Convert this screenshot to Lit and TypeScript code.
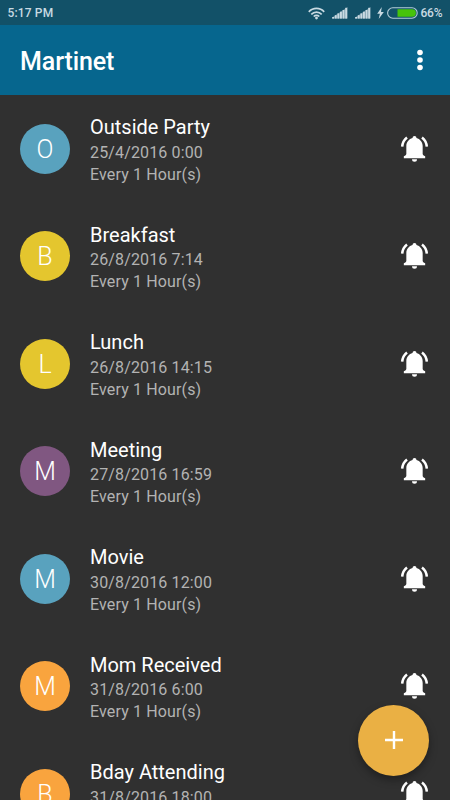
import { LitElement, html, css, svg } from "lit";
import { customElement } from "lit/decorators.js";
import { styleMap } from "lit/directives/style-map.js";

interface Reminder {
  title: string;
  date: string;
  color: string;
}

const REMINDERS: Reminder[] = [
  { title: "Outside Party", date: "25/4/2016 0:00", color: "#59a2be" },
  { title: "Breakfast", date: "26/8/2016 7:14", color: "#e4c62e" },
  { title: "Lunch", date: "26/8/2016 14:15", color: "#e4c62e" },
  { title: "Meeting", date: "27/8/2016 16:59", color: "#805781" },
  { title: "Movie", date: "30/8/2016 12:00", color: "#59a2be" },
  { title: "Mom Received", date: "31/8/2016 6:00", color: "#f9a43e" },
  { title: "Bday Attending", date: "31/8/2016 18:00", color: "#f9a43e" },
];

@customElement("status-bar")
export class StatusBar extends LitElement {
  static styles = css`
    :host {
      display: flex;
      align-items: center;
      height: 25px;
      box-sizing: border-box;
      padding: 1px 7.5px 0 7.5px;
      background: #125168;
      color: #c9dae2;
      font: 500 12px/24px Roboto, sans-serif;
    }
    .time { flex: 1; letter-spacing: 0.15px; }
    svg { display: block; flex: none; }
    .wifi { margin-right: 7px; }
    .signal { margin-right: 7px; }
    .bolt { margin-left: -1px; margin-right: 3px; }
    .battery { margin-right: 3px; }
    .percent { width: 22px; letter-spacing: -0.2px; }
  `;

  private signal() {
    return html`<svg class="signal" width="16" height="12" viewBox="0 0 16 12">
      <path d="M0 11.600V10.400L15.600 0V11.600z" fill="#c9dae2" opacity=".45" />
      ${[1.6, 3.4, 5.2, 6.9, 8.6, 10.8].map(
        (h, i) => svg`<rect x=${0.2 + i * 2.6} y=${11.6 - h} width="1.9" height=${h}
          fill="#c9dae2"></rect>`
      )}
    </svg>`;
  }

  render() {
    return html`
      <span class="time">5:17 PM</span>
      <svg class="wifi" width="17" height="13" viewBox="0 0 17 13">
        <g fill="none" stroke="#c9dae2" stroke-width="1.7">
          <path d="M.8 4.800C5 .3 12 .3 16.200 4.800" />
          <path d="M3.300 7.300c2.900-3 7.500-3 10.400 0" />
          <path d="M5.700 9.500c1.600-1.600 4-1.600 5.600 0" />
        </g>
        <circle cx="8.500" cy="11.100" r="1.400" fill="#c9dae2" />
      </svg>
      ${this.signal()} ${this.signal()}
      <svg class="bolt" width="7" height="12" viewBox="0 0 7 12">
        <path d="M4.800 0L.2 6.800h2.700L1.700 12 6.800 4.900H4z" fill="#c9dae2" />
      </svg>
      <svg class="battery" width="31" height="12" viewBox="0 0 31 12">
        <rect x=".6" y=".8" width="29.600" height="10.400" rx="5.200" fill="none"
          stroke="#b5cdd8" stroke-width="1.100" />
        <path d="M10.500 2.300h14.700a3.700 3.700 0 0 1 0 7.400H10.500z" fill="#46c30b" />
      </svg>
      <span class="percent">66%</span>
    `;
  }
}

@customElement("app-toolbar")
export class AppToolbar extends LitElement {
  static styles = css`
    :host {
      display: flex;
      align-items: center;
      justify-content: space-between;
      height: 70px;
      box-sizing: border-box;
      padding: 0 27px 0 20px;
      background: #06668e;
      color: #fff;
      font: 500 25px/30px Roboto, sans-serif;
    }
    .title { padding-top: 3px; letter-spacing: -0.1px; }
    svg { display: block; }
  `;

  render() {
    return html`
      <span class="title">Martinet</span>
      <svg width="6" height="22" viewBox="0 0 6 22" fill="#fff">
        <circle cx="3" cy="3.500" r="2.800" />
        <circle cx="3" cy="11" r="2.800" />
        <circle cx="3" cy="18.500" r="2.800" />
      </svg>
    `;
  }
}

@customElement("reminder-row")
export class ReminderRow extends LitElement {
  static properties = { item: { attribute: false } };
  declare item: Reminder;

  static styles = css`
    :host {
      display: flex;
      align-items: center;
      height: 107.5px;
      box-sizing: border-box;
      padding: 0 20px;
      font-family: Roboto, sans-serif;
    }
    .avatar {
      display: flex;
      align-items: center;
      justify-content: center;
      flex: none;
      width: 50px;
      height: 50px;
      border-radius: 50%;
      color: #fff;
      font-size: 25px;
      font-weight: 300;
      line-height: 50px;
    }
    .avatar span { padding-top: 1.500px; }
    .text { flex: 1; margin-left: 20px; padding-top: 3.900px; }
    .title { color: #fff; font-size: 20px; line-height: 25.600px; }
    .detail { color: #b3b3b3; font-size: 16px; line-height: 22px; letter-spacing: 0.14px; }
    .title + .detail { margin-top: 0.9px; }
    svg { display: block; flex: none; }
  `;

  render() {
    const { title, date, color } = this.item;
    return html`
      <div class="avatar" style=${styleMap({ background: color })}><span>${title[0]}</span></div>
      <div class="text">
        <div class="title">${title}</div>
        <div class="detail">${date}</div>
        <div class="detail">Every 1 Hour(s)</div>
      </div>
      <svg width="30" height="28" viewBox="0 0 90 84" fill="#fff">
        <path
          d="M43.500 3a6 6 0 0 1 6 6C60 12 68 21 68 33v23c0 3.500 3 5 7.500 8v6h-64v-6c4.500-3 7.500-4.500 7.500-8V33C19 21 27 12 37.500 9a6 6 0 0 1 6-6z"
        />
        <path d="M36 73h15a7.500 7.500 0 0 1-15 0z" />
        <path
          d="M6.500 35C7.500 24 12.500 14 21 7.500M80.500 35C79.500 24 74.500 14 66 7.500"
          fill="none" stroke="#fff" stroke-width="7.500"
        />
      </svg>
    `;
  }
}

@customElement("app-root")
export class AppRoot extends LitElement {
  static styles = css`
    :host {
      display: flex;
      flex-direction: column;
      position: relative;
      width: 450px;
      height: 800px;
      overflow: hidden;
      background: #303030;
    }
    status-bar, app-toolbar { flex: none; }
    .list { flex: 1; min-height: 0; overflow: hidden; }
    .fab {
      position: absolute;
      right: 21px;
      bottom: 24.5px;
      display: flex;
      align-items: center;
      justify-content: center;
      width: 71px;
      height: 71px;
      padding: 0;
      border: 0;
      border-radius: 50%;
      background: #eab044;
      box-shadow: 0 4px 8px rgba(0, 0, 0, 0.35);
    }
  `;

  render() {
    return html`
      <status-bar></status-bar>
      <app-toolbar></app-toolbar>
      <div class="list">
        ${REMINDERS.map((r) => html`<reminder-row .item=${r}></reminder-row>`)}
      </div>
      <button class="fab" aria-label="Add reminder">
        <svg width="18" height="18" viewBox="0 0 18 18" fill="#fff">
          <path d="M7.800 0h2.400v7.800H18v2.400h-7.800V18H7.800v-7.800H0V7.800h7.800z" />
        </svg>
      </button>
    `;
  }
}
